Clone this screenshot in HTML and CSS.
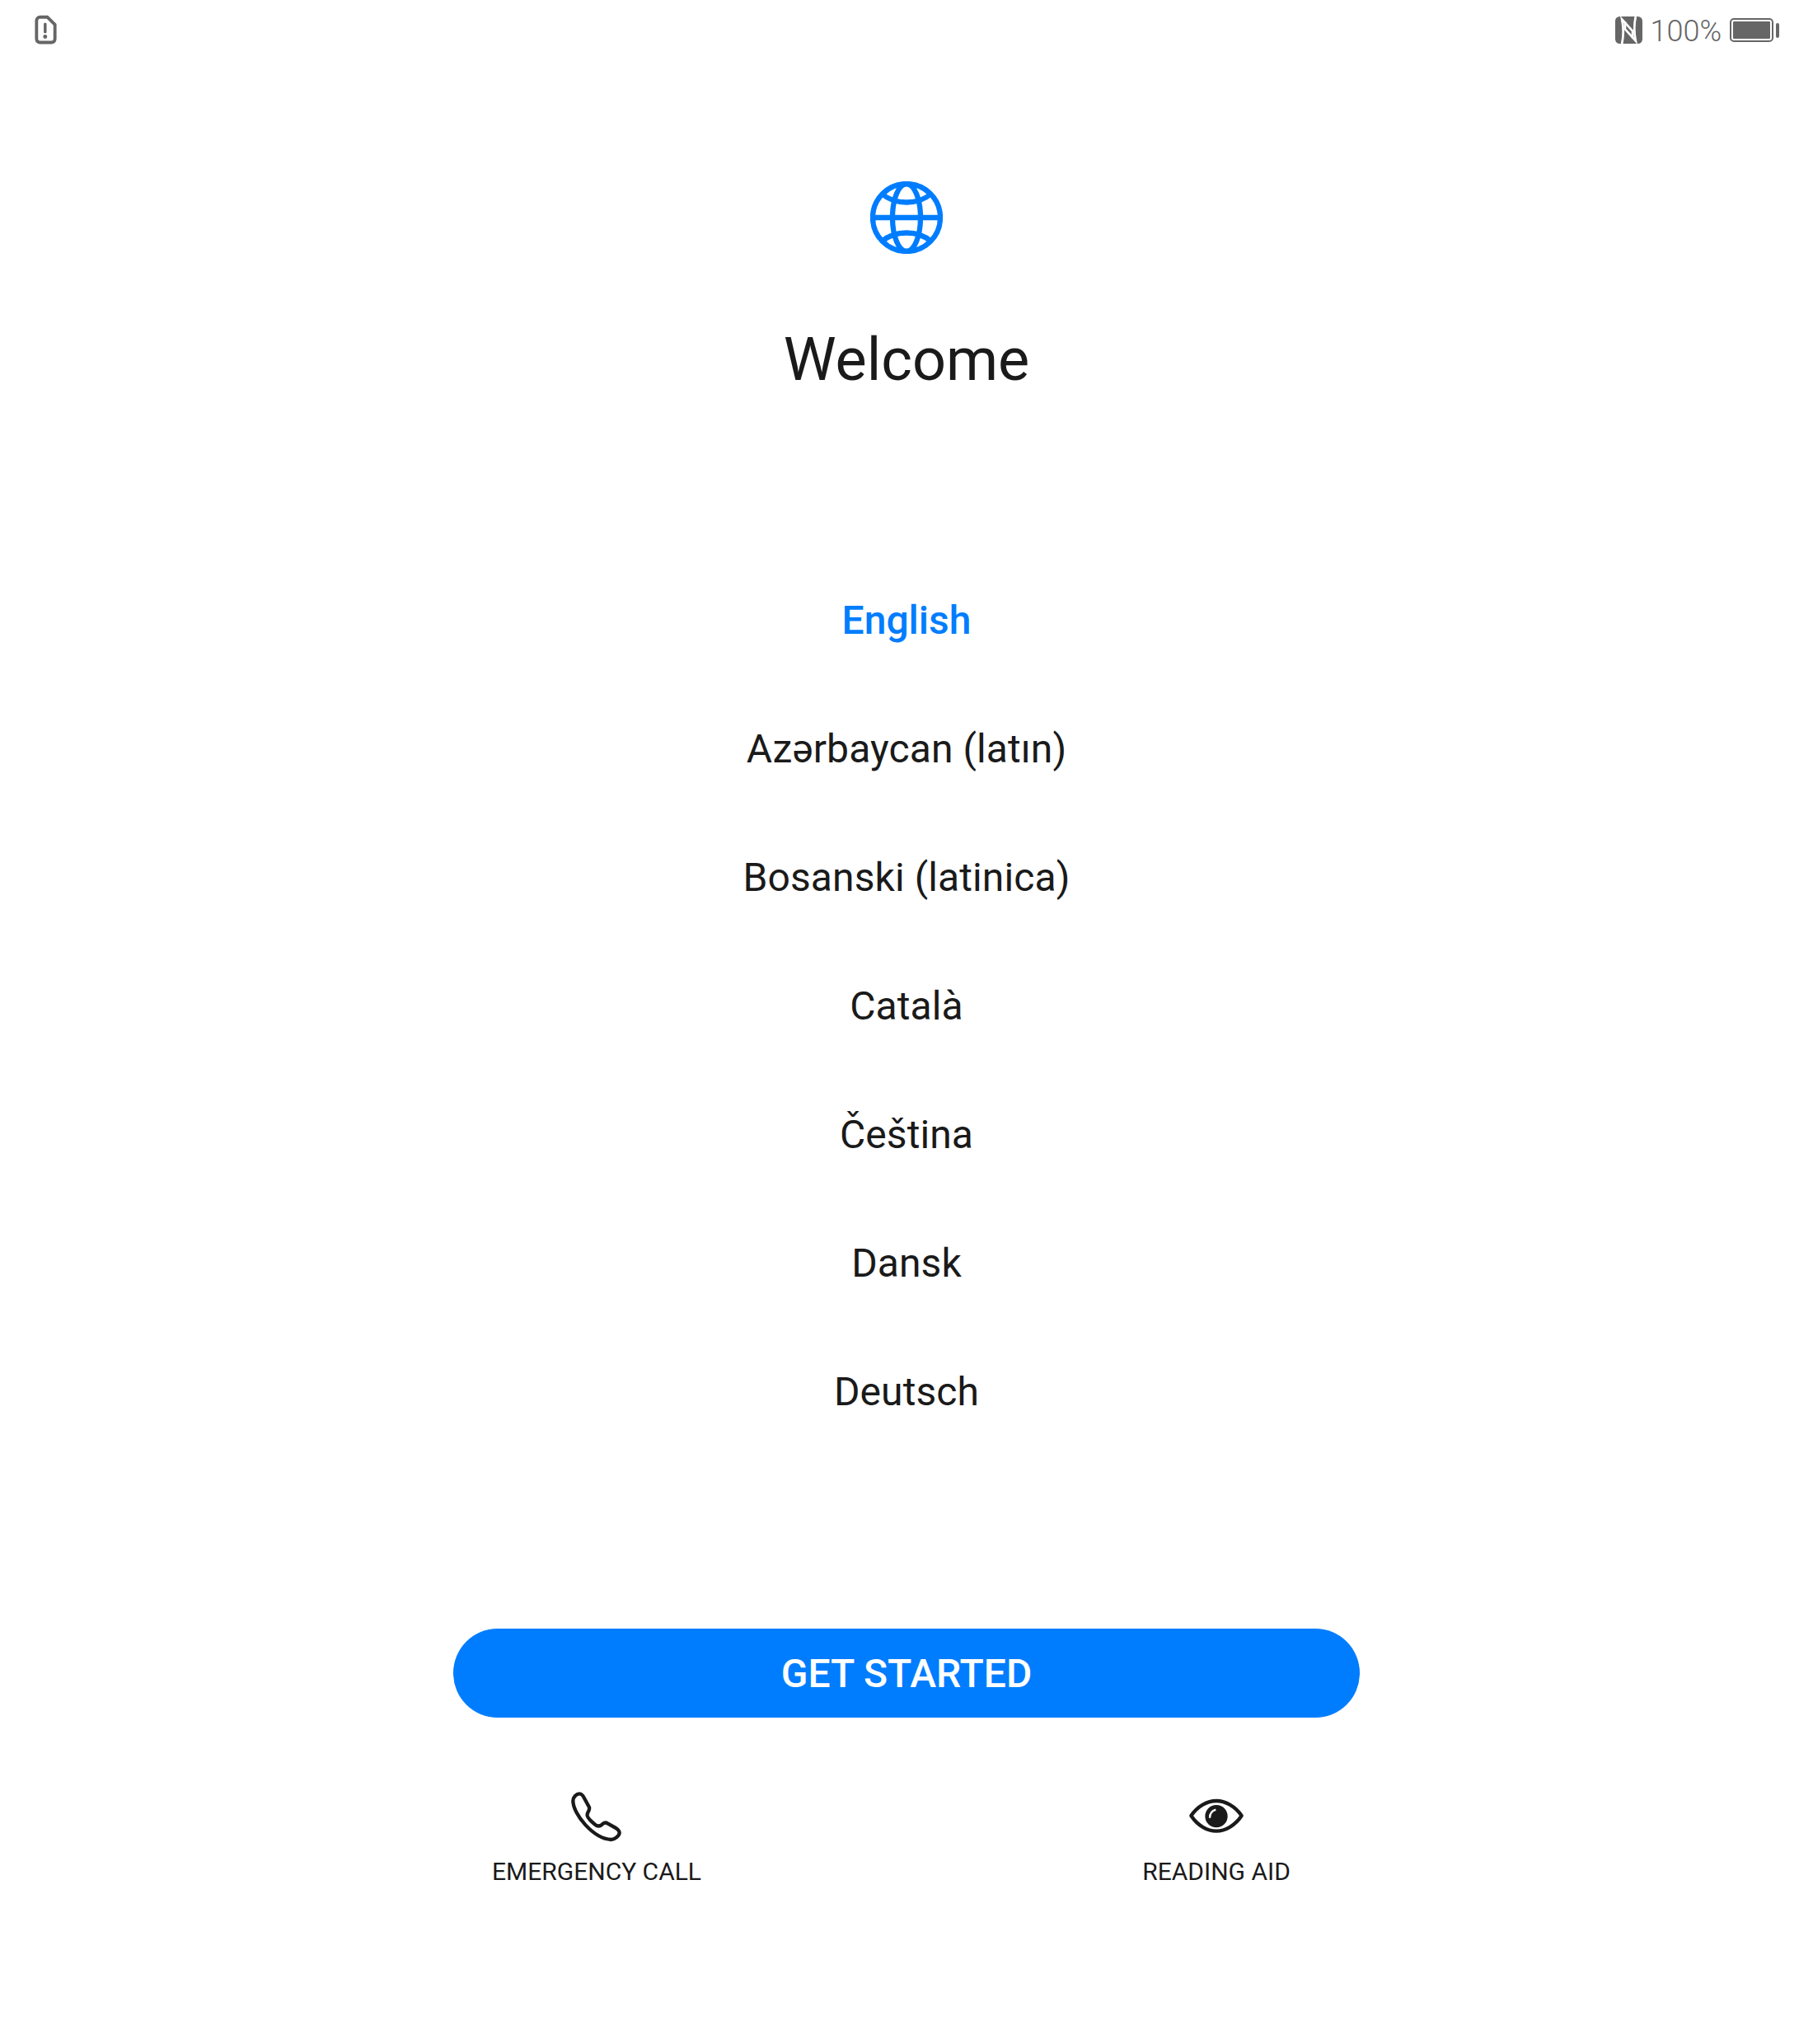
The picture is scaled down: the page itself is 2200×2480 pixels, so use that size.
FILE: index.html
```html
<!DOCTYPE html>
<html lang="en">
<head>
    <meta charset="UTF-8">
    <meta name="viewport" content="width=device-width, initial-scale=1.0">
    <title>Welcome</title>
    <link rel="stylesheet" href="styles.css">
</head>
<body>
    <div class="status-bar">
        <svg class="icon-sim" viewBox="125 54 82 106">
            <path d="M146 62H172L198 88V138A12 12 0 0 1 186 150H146A12 12 0 0 1 134 138V74A12 12 0 0 1 146 62Z" fill="none" stroke="#666" stroke-width="11" stroke-linejoin="round"/>
            <rect x="159" y="82" width="10" height="36" rx="4" fill="#666"/>
            <circle cx="164" cy="130" r="7" fill="#666"/>
        </svg>
        <div class="status-right">
            <svg class="icon-nfc" viewBox="0 0 97 97">
                <rect width="97" height="97" rx="16" fill="#666"/>
                <g fill="none" stroke="#fff" stroke-width="8">
                    <path d="M24 97C30 70 30 40 24 10L62 52V78"/>
                    <path d="M73 0C67 27 67 57 73 87L35 45V19"/>
                </g>
            </svg>
            <span class="battery-pct">100%</span>
            <div class="battery">
                <div class="battery-body"><div class="battery-level"></div></div>
                <div class="battery-tip"></div>
            </div>
        </div>
    </div>

    <div class="welcome">
        <svg class="icon-globe" viewBox="0 0 88 88">
            <g fill="none" stroke="#007dff" stroke-width="6.3">
                <circle cx="44" cy="44" r="41"/>
                <ellipse cx="44" cy="44" rx="17" ry="41"/>
                <path d="M3 44H85"/>
                <path d="M14 15C30 29 58 29 74 15"/>
                <path d="M14 73C30 59 58 59 74 73"/>
            </g>
        </svg>
        <h1>Welcome</h1>
    </div>

    <ul class="languages">
        <li class="selected">English</li>
        <li>Azərbaycan (latın)</li>
        <li>Bosanski (latinica)</li>
        <li>Català</li>
        <li>Čeština</li>
        <li>Dansk</li>
        <li>Deutsch</li>
    </ul>

    <button class="start-btn">GET STARTED</button>

    <div class="actions">
        <div class="action">
            <svg class="action-icon" viewBox="90 54 204 204">
                <path d="M130 76C118 76 106 88 106 102C106 150 180 240 245 243C258 243 275 228 275 218C275 210 268 205 262 201L232 184C222 178 216 184 208 191C200 196 190 193 180 183C165 170 155 158 158 150C160 142 168 135 165 125L147 92C142 82 138 76 130 76Z" fill="none" stroke="#1a1a1a" stroke-width="13" stroke-linejoin="round"/>
            </svg>
            <span>EMERGENCY CALL</span>
        </div>
        <div class="action">
            <svg class="action-icon" viewBox="66 58 204 204">
                <path d="M76 160C100 125 135 106 168 106C200 106 236 125 260 160C236 196 200 216 168 216C135 216 100 196 76 160Z" fill="none" stroke="#1a1a1a" stroke-width="13" stroke-linejoin="round"/>
                <circle cx="168" cy="162" r="41" fill="#1a1a1a"/>
                <path d="M144 168C144 152 152 142 166 138" fill="none" stroke="#fff" stroke-width="7"/>
            </svg>
            <span>READING AID</span>
        </div>
    </div>
</body>
</html>
```

FILE: styles.css
```css
* {
    box-sizing: border-box;
}
body {
    margin: 0;
    min-height: 2480px;
    background: #fff;
    color: #1a1a1a;
    font-family: Roboto, "Noto Sans", sans-serif;
    display: flex;
    flex-direction: column;
    align-items: center;
}
.status-bar {
    width: 100%;
    height: 72px;
    padding: 18px 41px 0 41px;
    display: flex;
    justify-content: space-between;
    align-items: flex-start;
}
.icon-sim {
    width: 29px;
    height: 37px;
}
.status-right {
    display: flex;
    align-items: center;
    height: 37px;
    color: #666;
}
.icon-nfc {
    width: 33px;
    height: 33px;
}
.battery-pct {
    font-size: 36px;
    font-weight: 300;
    margin: 2px 10px 0 9px;
}
.battery {
    display: flex;
    align-items: center;
    gap: 3px;
}
.battery-body {
    width: 53px;
    height: 29px;
    border: 2px solid #666;
    border-radius: 5px;
    padding: 2px;
}
.battery-level {
    height: 100%;
    background: #666;
    border-radius: 1px;
}
.battery-tip {
    width: 4px;
    height: 18px;
    background: #666;
    border-radius: 2px;
}
.welcome {
    display: flex;
    flex-direction: column;
    align-items: center;
    margin-top: 148px;
}
.icon-globe {
    width: 88px;
    height: 88px;
}
h1 {
    margin: 87px 0 0 0;
    font-size: 72px;
    font-weight: 400;
    line-height: 84px;
}
.languages {
    list-style: none;
    margin: 196px 0 0 0;
    padding: 0;
    text-align: center;
    font-size: 48px;
    line-height: 156px;
    letter-spacing: 0.1px;
}
.selected {
    color: #007dff;
    font-weight: 500;
    letter-spacing: 0;
}
.start-btn {
    width: 1100px;
    height: 108px;
    margin-top: 209px;
    border: none;
    border-radius: 54px;
    background: #007dff;
    color: #fff;
    font-family: inherit;
    font-size: 48px;
    font-weight: 500;
}
.actions {
    width: 1504px;
    margin-top: 85px;
    display: grid;
    grid-template-columns: 1fr 1fr;
}
.action {
    display: flex;
    flex-direction: column;
    align-items: center;
    font-size: 30px;
    line-height: 36px;
}
.action-icon {
    width: 68px;
    height: 68px;
    margin-bottom: 16px;
}
```
